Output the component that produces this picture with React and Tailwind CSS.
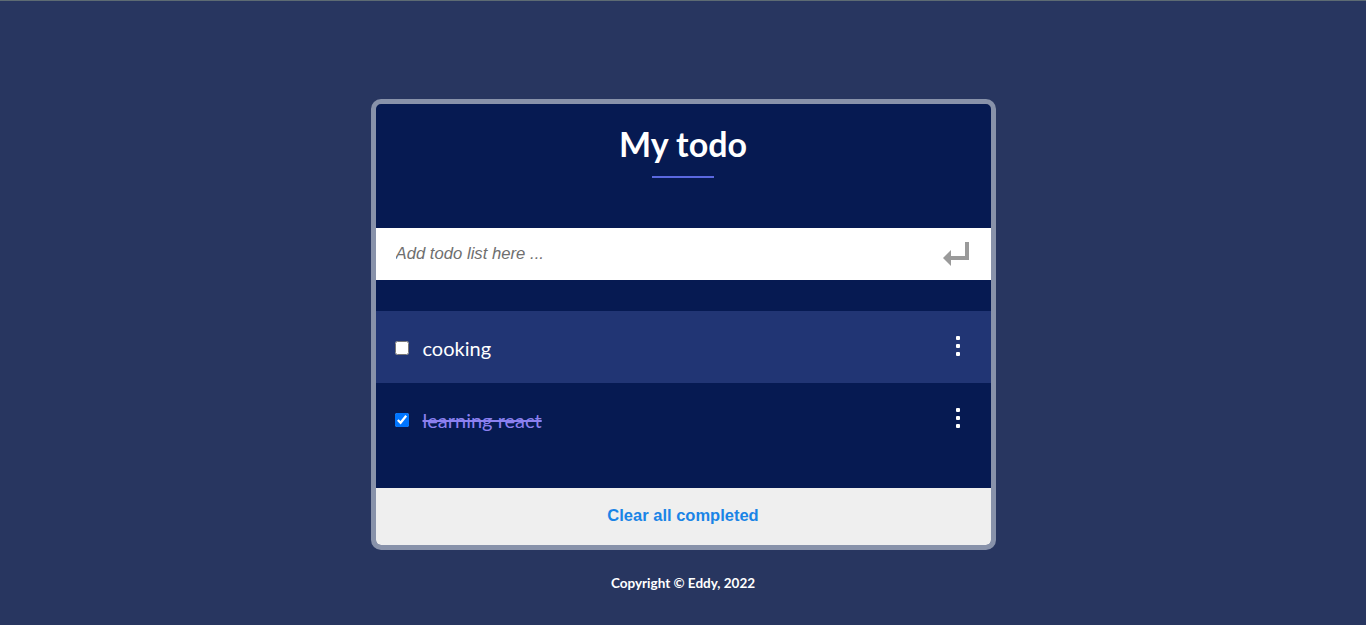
import React, { useState } from 'react';

const EnterIcon = () => (
    <svg width="30" height="27" viewBox="0 0 30 27" fill="none">
        <path d="M26 1 V17 H8" stroke="#9a9a9a" strokeWidth="4" />
        <path d="M10 9 L2 17 L10 25 Z" fill="#9a9a9a" />
    </svg>
);

const Kebab = () => (
    <div className="flex flex-col gap-[4px] items-center -mt-[4px]">
        <span className="w-[4px] h-[4px] bg-white rounded-[1px]"></span>
        <span className="w-[4px] h-[4px] bg-white rounded-[1px]"></span>
        <span className="w-[4px] h-[4px] bg-white rounded-[1px]"></span>
    </div>
);

const App = () => {
    const [todos, setTodos] = useState([
        { id: 1, text: 'cooking', done: false },
        { id: 2, text: 'learning react', done: true },
    ]);

    const toggle = (id) => setTodos(todos.map(t => t.id === id ? { ...t, done: !t.done } : t));

    return (
        <div className="min-h-[625px] bg-[#283660] border-t border-[#5d6b73] flex flex-col items-center font-['Lato',sans-serif]">
            {/* Card */}
            <div className="mt-[98px] w-[625px] border-[5px] border-[#8892aa] rounded-[10px] bg-[#061a52] overflow-hidden">
                <div className="h-[124px] flex flex-col items-center">
                    <h1 className="mt-[20px] text-[34px] leading-[40px] font-bold text-white">My todo</h1>
                    <div className="mt-[12px] w-[62px] h-[2px] bg-[#5a68e0]"></div>
                </div>

                {/* Input */}
                <div className="h-[52px] bg-white flex items-center pl-[20px] pr-[20px]">
                    <input
                        type="text"
                        placeholder="Add todo list here ..."
                        className="flex-1 outline-none bg-transparent text-[16.7px] italic text-[#555] placeholder:text-[#6f6f6f] font-['Liberation_Sans',Arial,sans-serif]"
                    />
                    <EnterIcon />
                </div>

                {/* List */}
                <div className="mt-[31px] pb-[33px]">
                    {todos.map((todo, i) => (
                        <div
                            key={todo.id}
                            className={`h-[72px] flex items-center pt-[2px] pl-[19px] pr-[31px] ${i === 0 ? 'bg-[#213574]' : ''}`}
                        >
                            <input
                                type="checkbox"
                                checked={todo.done}
                                onChange={() => toggle(todo.id)}
                                className="w-[14px] h-[14px] m-0"
                            />
                            <span
                                className={`ml-[14px] flex-1 text-[20px] ${todo.done ? 'line-through text-[#8b80f0]' : 'text-white'}`}
                            >
                                {todo.text}
                            </span>
                            <Kebab />
                        </div>
                    ))}
                </div>

                {/* Footer */}
                <div className="h-[57px] bg-[#efefef] flex items-center justify-center">
                    <button className="-mt-[2px] text-[16.5px] font-bold text-[#1a84e6] font-['Liberation_Sans',Arial,sans-serif]">
                        Clear all completed
                    </button>
                </div>
            </div>

            <p className="mt-[23px] text-[13.5px] font-bold text-white">Copyright © Eddy, 2022</p>
        </div>
    );
};

export default App;
